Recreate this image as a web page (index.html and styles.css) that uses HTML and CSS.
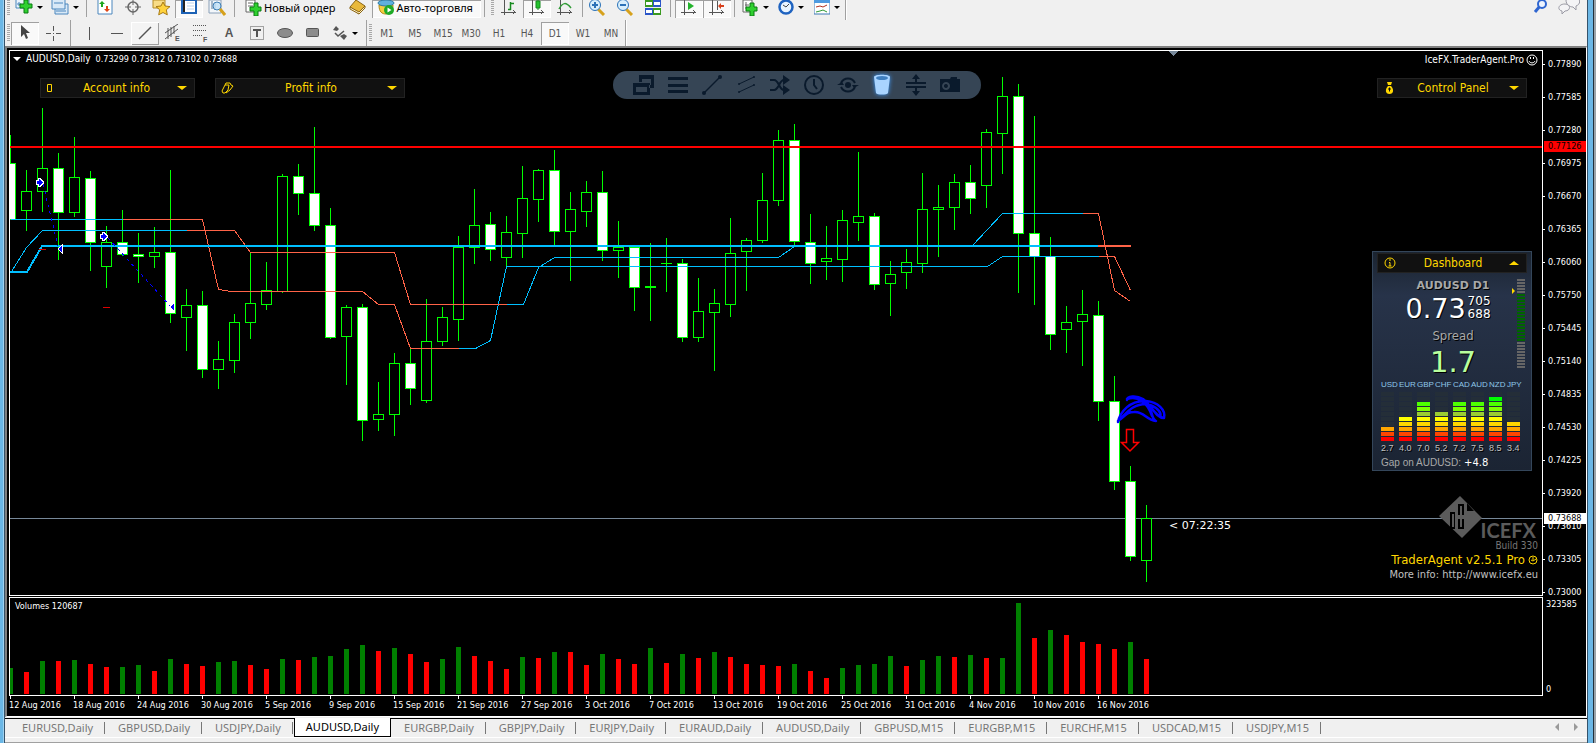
FILE: index.html
```html
<!DOCTYPE html>
<html lang="ru">
<head>
<meta charset="utf-8">
<title>AUDUSD,Daily</title>
<link rel="stylesheet" href="styles.css">
</head>
<body>
<div class="edge edge-left"></div>
<div class="window">
  <header class="bars">
    <div class="bar bar-main" role="toolbar" aria-label="Standard">
      <i class="grip"></i>
      <button class="tool with-caret" aria-label="New chart"><svg width="18" height="16"><path d="M1 0v8h13V0" fill="#eaf3fb" stroke="#4b86bd"/><path d="M4 2v4M2 4h4" stroke="#4b86bd"/><path d="M9 0h4v4h4v4h-4v5H9V8H5V4h4z" fill="#2fd02f" stroke="#0a7a12"/></svg><b class="caret"></b></button>
      <button class="tool with-caret" aria-label="Profiles"><svg width="18" height="16"><path d="M1 0v9h13V0M4 9v5h13V4h-3" fill="#d9e9f7" stroke="#4b86bd"/><path d="M3 3h9M5 11h10" stroke="#4b86bd"/></svg><b class="caret"></b></button>
      <i class="sep"></i>
      <button class="tool" aria-label="Market Watch"><svg width="16" height="16"><path d="M1 0v14h14V0" fill="#fff" stroke="#4b86bd"/><path d="M5 1l3 3H6v3H4V4H2z" fill="#1fa51f"/><path d="M10 12L7 9h2V6h2v3h2z" fill="#e04416"/></svg></button>
      <button class="tool" aria-label="Data Window"><svg width="16" height="16" fill="none" stroke="#666"><circle cx="8" cy="7" r="5" stroke-width="1.500"/><path d="M8 0v5M8 9v6M0 7h6M10 7h6"/></svg></button>
      <button class="tool" aria-label="Navigator"><svg width="19" height="16"><path d="M1 0v8h12V0z" fill="#f8dc86" stroke="#b58b26"/><path d="M11 2l2 4 5 .6-3.700 3.200 1 5L11 12.500 6.700 14.800l1-5L4 6.600 9 6z" fill="#ffd23c" stroke="#a87a12"/></svg></button>
      <button class="tool pressed" aria-label="Terminal"><svg width="16" height="16"><path d="M1 0v13h14V0z" fill="#fff" stroke="#1d62b5" stroke-width="2"/><path d="M3 0v12" stroke="#222" stroke-width="2"/><path d="M6 3h7M6 6h7M6 9h7" stroke="#b9d2ee"/></svg></button>
      <button class="tool" aria-label="Strategy Tester"><svg width="18" height="16"><path d="M1 0v13h12V0z" fill="#f3f7fb" stroke="#8aa0b8"/><path d="M4 1v8M7 3v7" stroke="#5a7a9a"/><circle cx="9" cy="6" r="4" fill="#bfe0f7" fill-opacity=".8" stroke="#3f7fb5"/><path d="M12 9l5 6" stroke="#d6a11c" stroke-width="3"/></svg></button>
      <i class="sep"></i>
      <button class="tool text" aria-label="Новый ордер"><svg width="18" height="16"><path d="M2 0v12h9V0z" fill="#fff" stroke="#666"/><path d="M4 3h5M4 6h5" stroke="#666"/><path d="M10 3h4v4h3v4h-3v5h-4v-5H6V7h4z" fill="#2fd02f" stroke="#0a7a12"/></svg><span>Новый ордер</span></button>
      <button class="tool" aria-label="MetaEditor"><svg width="18" height="16"><path d="M1 7L7 0l9 6-6 8z" fill="#e9b93b" stroke="#8a6414"/><path d="M1 7l9 5 6-6v2l-6 6-9-5z" fill="#fff2c4" stroke="#8a6414"/></svg></button>
      <button class="tool text pressed" aria-label="Авто-торговля"><svg width="18" height="16"><path d="M2 5c0 7 3 9 7 9s7-2 7-9z" fill="#f4cd3f" stroke="#b18918"/><ellipse cx="9" cy="3" rx="8" ry="3" fill="#5fb0dc" stroke="#2d7aa5"/><circle cx="12" cy="10" r="5" fill="#1faa27"/><path d="M10.500 7.500l4 2.500-4 2.500z" fill="#fff"/></svg><span>Авто-торговля</span></button>
      <i class="sep"></i><i class="grip"></i>
      <button class="tool" aria-label="Bar chart"><svg width="16" height="16" fill="none"><path d="M3.500 0v15M0 12.500h15M12 10l2 2-2 2" stroke="#555"/><path d="M9.500 2v8M7 9.500h3M10 3.500h3" stroke="#168a1e" stroke-width="1.500"/></svg></button>
      <button class="tool pressed" aria-label="Candlesticks"><svg width="16" height="16" fill="none"><path d="M3.500 0v15M0 12.500h15M12 10l2 2-2 2" stroke="#555"/><path d="M9 0v10" stroke="#168a1e"/><path d="M7 1h4v7H7z" fill="#23c32c" stroke="#168a1e"/></svg></button>
      <button class="tool" aria-label="Line chart"><svg width="16" height="16" fill="none"><path d="M3.500 0v15M0 12.500h15M12 10l2 2-2 2" stroke="#555"/><path d="M2 9c4-7 7-7 12-1" stroke="#2f9a35" stroke-width="1.500"/></svg></button>
      <i class="sep sep-tight"></i>
      <button class="tool" aria-label="Zoom in"><svg width="18" height="16"><path d="M10 9l6 6" stroke="#d6a11c" stroke-width="3"/><circle cx="7" cy="5" r="5.500" fill="#d8effc" stroke="#2b72b8"/><path d="M4 5h6M7 2v6" stroke="#2b72b8" stroke-width="2"/></svg></button>
      <button class="tool" aria-label="Zoom out"><svg width="18" height="16"><path d="M10 9l6 6" stroke="#d6a11c" stroke-width="3"/><circle cx="7" cy="5" r="5.500" fill="#d8effc" stroke="#2b72b8"/><path d="M4 5h6" stroke="#2b72b8" stroke-width="2"/></svg></button>
      <button class="tool" aria-label="Tile windows"><svg width="16" height="16"><path d="M0 0h8v7H0zM8 8h8v7H8z" fill="#3a9a20"/><path d="M8 0h8v7H8zM0 8h8v7H0z" fill="#2a55c8"/><path d="M1 2h6v3H1zM9 2h6v3H9zM1 10h6v3H1zM9 10h6v3H9z" fill="#fff"/></svg></button>
      <i class="sep"></i>
      <button class="tool pressed" aria-label="Auto scroll"><svg width="16" height="16" fill="none"><path d="M3.500 0v15M0 12.500h15M12 10l2 2-2 2" stroke="#555"/><path d="M7 2l6 4-6 4z" fill="#23b32c"/></svg></button>
      <button class="tool pressed" aria-label="Chart shift"><svg width="16" height="16" fill="none"><path d="M3.500 0v15M0 12.500h15M12 10l2 2-2 2M8.500 1v9" stroke="#555"/><path d="M9 6l3-3v2h3v2h-3v2z" fill="#d8401c"/></svg></button>
      <i class="sep sep-mid"></i>
      <button class="tool with-caret" aria-label="Indicators"><svg width="18" height="16"><path d="M2 0v12h9V0z" fill="#fff" stroke="#666"/><path d="M5 2v7M4 5h4" stroke="#666"/><path d="M9 3h4v4h3v4h-3v5H9v-5H5V7h4z" fill="#2fd02f" stroke="#0a7a12"/></svg><b class="caret"></b></button>
      <button class="tool with-caret" aria-label="Periods"><svg width="16" height="16"><circle cx="8" cy="7" r="6.500" fill="#eaf5ff" stroke="#1f63c0" stroke-width="2.500"/><path d="M5 5l3 2 3-3" fill="none" stroke="#444"/></svg><b class="caret"></b></button>
      <button class="tool with-caret" aria-label="Templates"><svg width="16" height="16"><path d="M0 0h16v14H0z" fill="#fff" stroke="#3c78b4"/><path d="M0 0h16v3H0z" fill="#4d9ae0"/><path d="M2 7l4-1 3 1 4-2" fill="none" stroke="#b03020"/><path d="M2 12l4-1 3-1 4 2" fill="none" stroke="#2f9a35"/></svg><b class="caret"></b></button>
      <span class="bar-end"></span>
      <span class="spacer"></span>
      <button class="tool" aria-label="Search"><svg width="16" height="14" fill="none"><path d="M2 12l5-6" stroke="#2f66d0" stroke-width="3"/><circle cx="9" cy="4" r="4" fill="#eef4ff" stroke="#2f66d0" stroke-width="2"/></svg></button>
      <button class="tool tool-chat" aria-label="Chat"><svg width="22" height="16" fill="#f4f4f6" stroke="#9a9aa4"><path d="M8 0c0 5 4 7 7 7l3 3V6c5-2 4-6 2-8"/><path d="M7 4c-7 0-8 6-3 7v3l3-3c6 0 6-7 0-7z"/></svg></button>
    </div>
    <div class="bar bar-draw" role="toolbar" aria-label="Drawing">
      <i class="grip"></i>
      <button class="tool pressed" aria-label="Cursor"><svg width="12" height="16"><path d="M2 0v12l3-3 2 5 2-1-2-5h4z" fill="#444"/></svg></button>
      <button class="tool" aria-label="Crosshair"><svg width="16" height="16" stroke="#555"><path d="M8.500 1v5M8.500 11v5M1 8.500h5M11 8.500h5"/><path d="M8 8.500h1"/></svg></button>
      <i class="sep"></i>
      <button class="tool" aria-label="Vertical line"><svg width="2" height="13"><path d="M1.500 0v13" stroke="#555"/></svg></button>
      <button class="tool" aria-label="Horizontal line"><svg width="12" height="3"><path d="M0 1.500h12" stroke="#555"/></svg></button>
      <button class="tool raised" aria-label="Trend line"><svg width="14" height="14"><path d="M1 13L13 1" stroke="#555" stroke-width="1.500"/></svg></button>
      <button class="tool" aria-label="Equidistant channel"><svg width="18" height="18" stroke="#555"><path d="M1 9L14 0M1 15L14 5M4 4v11M7 3v10M10 2v8"/><text x="11" y="17" class="glyph">E</text></svg></button>
      <button class="tool" aria-label="Fibonacci"><svg width="16" height="18"><path d="M0 1.500h14M0 6.500h14M0 11.500h10" stroke="#555" stroke-dasharray="1 1"/><text x="10" y="18" class="glyph">F</text></svg></button>
      <button class="tool big" aria-label="Text">A</button>
      <button class="tool" aria-label="Text label"><svg width="14" height="14"><path d="M.5.5h13v13H.5z" fill="none" stroke="#555" stroke-dasharray="1 1"/><path d="M3 4h8M7 4v7" stroke="#555" stroke-width="2"/></svg></button>
      <button class="tool" aria-label="Ellipse"><svg width="16" height="12"><ellipse cx="8" cy="6" rx="7.500" ry="4.500" fill="#8c8c8c" stroke="#555"/></svg></button>
      <button class="tool" aria-label="Rectangle"><svg width="14" height="10"><rect x=".5" y=".5" width="12" height="8" rx="1" fill="#8c8c8c" stroke="#555"/></svg></button>
      <button class="tool with-caret" aria-label="Arrows"><svg width="16" height="14"><path d="M4 0l3 3-2 2-4-1zM12 8l3 2-3 4-4-4z" fill="#555"/><path d="M3 7l3 3 6-5" fill="none" stroke="#555" stroke-width="1.500"/></svg><b class="caret"></b></button>
      <i class="sep sep-tight"></i><i class="grip"></i>
      <button class="tool tf">M1</button><button class="tool tf">M5</button><button class="tool tf">M15</button><button class="tool tf">M30</button><button class="tool tf">H1</button><button class="tool tf">H4</button><button class="tool tf pressed">D1</button><button class="tool tf">W1</button><button class="tool tf">MN</button>
      <span class="bar-end"></span>
    </div>
  </header>

  <main class="chart">
    <section class="plot">
      <svg class="canvas" id="price" aria-label="AUDUSD price chart"></svg>
      <div class="quote"><b class="caret light"></b><span>AUDUSD,Daily</span><span class="ohlc">0.73299 0.73812 0.73102 0.73688</span></div>
      <div class="expert"><span>IceFX.TraderAgent.Pro</span><svg width="12" height="12" fill="none" stroke="#fff"><circle cx="6" cy="6" r="5"/><path d="M3 7c1 2.500 5 2.500 6 0M4.500 3v2M7.500 3v2"/></svg></div>
      <div class="panels">
        <button class="head head-account"><svg width="10" height="12"><path d="M1.500 2.500h4v7h-4z" fill="none" stroke="#ffd700"/></svg><span>Account info</span><b class="caret wide"></b></button>
        <button class="head head-profit"><svg width="14" height="12" fill="none" stroke="#ffd700"><path d="M4 3h4l-1 5-3 3H2l-1-2zM4 3l1-2h4l1 2M10 3l2 1-3 4-4 3"/></svg><span>Profit info</span><b class="caret wide"></b></button>
      </div>
      <div class="pill" role="toolbar" aria-label="Chart tools">
        <button aria-label="Windows"><svg viewBox="0 0 22 22"><path d="M6 1h15v13h-5v-3h2V5H9v3H6zM0 9h17v12H0zM3 13v5h11v-5z" fill-rule="evenodd"/></svg></button>
        <button aria-label="Levels"><svg viewBox="0 0 22 22"><path d="M1 3h20v3H1zM1 10h20v3H1zM1 16h20v3H1z"/></svg></button>
        <button aria-label="Line"><svg viewBox="0 0 22 22"><path d="M3 19L19 3" class="stroke"/><circle cx="3" cy="19" r="2"/><circle cx="19" cy="3" r="2"/></svg></button>
        <button aria-label="Channel"><svg viewBox="0 0 22 22"><path d="M4 10l15-7M4 18l15-7" class="stroke thin"/><circle cx="4" cy="10" r="1"/><circle cx="19" cy="3" r="1"/><circle cx="4" cy="18" r="1"/><circle cx="19" cy="11" r="1"/></svg></button>
        <button aria-label="Shuffle"><svg viewBox="0 0 22 22"><path d="M1 6h4c5 0 5 10 10 10M1 16h4c5 0 5-10 10-10" class="stroke thick"/><path d="M14 1l7 5-7 5zM14 11l7 5-7 5z"/></svg></button>
        <button aria-label="Time"><svg viewBox="0 0 22 22"><circle cx="11" cy="11" r="9" class="stroke thick"/><path d="M11 5v6l3 4" class="stroke thick"/></svg></button>
        <button aria-label="Refresh"><svg viewBox="0 0 22 22"><path d="M4 9c3-6 11-6 14 0M4 13c3 6 11 6 14 0" class="stroke thick"/><circle cx="11" cy="11" r="3"/><path d="M0 11l5-3 2 3zM22 11l-5 3-2-3z"/></svg></button>
        <button class="lit" aria-label="Trash"><svg viewBox="0 0 22 22"><path d="M3 3c0-3 16-3 16 0l-2 16c-1 2-11 2-12 0z"/><ellipse cx="11" cy="4" rx="6" ry="2" fill="#3f7fc0"/></svg></button>
        <button aria-label="Fit"><svg viewBox="0 0 22 22"><path d="M1 8h20v2H1zM1 12h20v2H1zM10 3h2v6h-2zM10 13h2v6h-2z"/><path d="M7 5l4-5 4 5zM7 17l4 5 4-5z"/></svg></button>
        <button aria-label="Screenshot"><svg viewBox="0 0 22 22"><path d="M1 5h10l1-2h6v2h3v13H1zM7 8a4 4 0 1 0 .1 0zM7 10a2 2 0 1 1-.1 0z" fill-rule="evenodd"/></svg></button>
      </div>
      <aside class="side">
        <button class="head"><svg width="14" height="12" fill="#ffd700"><path d="M4 0h5L8 3H5zM5 4h3c3 3 3 8-1.500 8S2 7 5 4z"/><path d="M6.500 5.500v4M5 7h3" stroke="#111"/></svg><span>Control Panel</span><b class="caret wide"></b></button>
        <section class="dash">
          <button class="head"><svg width="14" height="12"><circle cx="7" cy="6" r="5" fill="none" stroke="#ffd700"/><path d="M7 2v2M6 5.500h1V9M5.500 9h3" fill="none" stroke="#ffd700"/></svg><span>Dashboard</span><b class="caret wide up"></b></button>
          <div class="dash-quote">
            <div class="dash-main">
              <h2>AUDUSD D1</h2>
              <div class="rate"><span class="rate-big">0.73</span><span class="rate-small"><span>705</span><span>688</span></span></div>
              <div class="spread-label">Spread</div>
              <div class="spread">1.7</div>
            </div>
            <div class="pointer"></div>
            <div class="meter" id="meter"></div>
          </div>
          <div class="strength" id="strength"></div>
          <div class="gap-row"><span>Gap on AUDUSD:</span><span class="gap-value">+4.8</span></div>
        </section>
      </aside>
      <div class="credit">
        <div class="brand"><svg width="44" height="44"><path d="M21 1l22 22-20 20L0 21z" fill="#5b5b5b"/><path d="M11 17h5v17h-5zM19 9h6v11h-6zM19 24h6v10h-6zM28 8l7 8h-7z" fill="#000"/><path d="M13 19h2v13h-2zM21 11h2v21h-2z" fill="#5b5b5b"/></svg><span>ICEFX</span></div>
        <div class="build">Build 330</div>
        <div class="product"><span>TraderAgent v2.5.1 Pro</span><svg width="10" height="10" fill="none" stroke="#ffd700"><circle cx="5" cy="5" r="4"/><path d="M3 5l2 1 3-2M5 2v3"/></svg></div>
        <div class="more">More info: http://www.icefx.eu</div>
      </div>
    </section>
    <div class="scale">
      <ul class="prices">
        <li>0.77890</li><li>0.77585</li><li>0.77280</li><li>0.76975</li><li>0.76670</li><li>0.76365</li><li>0.76060</li><li>0.75750</li><li>0.75445</li><li>0.75140</li><li>0.74835</li><li>0.74530</li><li>0.74225</li><li>0.73920</li><li>0.73610</li><li>0.73305</li><li>0.73000</li>
      </ul>
      <span class="tag tag-level">0.77126</span>
      <span class="tag tag-bid">0.73688</span>
    </div>
    <section class="plot volume">
      <svg class="canvas" id="volume" aria-label="Volumes"></svg>
      <div class="volume-label">Volumes 120687</div>
    </section>
    <div class="scale vol-scale"><span>323585</span><span>0</span></div>
    <ol class="dates">
      <li>12 Aug 2016</li><li>18 Aug 2016</li><li>24 Aug 2016</li><li>30 Aug 2016</li><li>5 Sep 2016</li><li>9 Sep 2016</li><li>15 Sep 2016</li><li>21 Sep 2016</li><li>27 Sep 2016</li><li>3 Oct 2016</li><li>7 Oct 2016</li><li>13 Oct 2016</li><li>19 Oct 2016</li><li>25 Oct 2016</li><li>31 Oct 2016</li><li>4 Nov 2016</li><li>10 Nov 2016</li><li>16 Nov 2016</li>
    </ol>
  </main>

  <footer class="tabs">
    <nav>
      <a href="#c1">EURUSD,Daily</a><a href="#c2">GBPUSD,Daily</a><a href="#c3">USDJPY,Daily</a><a href="#c4" class="active">AUDUSD,Daily</a><a href="#c5">EURGBP,Daily</a><a href="#c6">GBPJPY,Daily</a><a href="#c7">EURJPY,Daily</a><a href="#c8">EURAUD,Daily</a><a href="#c9">AUDUSD,Daily</a><a href="#c10">GBPUSD,M15</a><a href="#c11">EURGBP,M15</a><a href="#c12">EURCHF,M15</a><a href="#c13">USDCAD,M15</a><a href="#c14">USDJPY,M15</a>
    </nav>
    <div class="scrollers"><button aria-label="Previous tabs"><svg width="5" height="8"><path d="M4 0v8L0 4z" fill="#999"/></svg></button><button aria-label="Next tabs"><svg width="5" height="8"><path d="M0 0v8l4-4z" fill="#999"/></svg></button></div>
  </footer>
</div>
<div class="edge edge-right"></div>
<script src="chart.js"></script>
</body>
</html>
```
FILE: styles.css
```css
* { box-sizing: border-box; }
body { margin: 0; display: flex; min-height: 100vh; background: #f0f0f0; font-family: "DejaVu Sans Condensed", "DejaVu Sans", sans-serif; font-size: 9px; color: #fff; }
button { border: 0; padding: 0; margin: 0; background: none; font: inherit; color: inherit; }
ul, ol { list-style: none; margin: 0; padding: 0; }
svg { display: block; flex: none; }

.edge { flex: none; }
.edge-left { width: 5px; background: linear-gradient(90deg, #6bb7e6 0 3px, #9fd2f0 3px 4px, #34526a 4px); }
.edge-right { width: 9px; background: linear-gradient(90deg, #34526a 0 1px, #6bb7e6 1px 6px, #22313d 6px 7px, #9aa3aa 7px); }
.window { flex: 1; min-width: 0; display: flex; flex-direction: column; }

.bar { display: flex; }
.bar-main { height: 20px; align-items: flex-start; }
.bar-main .tool { height: 18px; align-items: flex-start; }
.bar-draw { height: 26px; align-items: center; }
.grip { width: 4px; margin: 0 0 0 2px; align-self: stretch; flex: none; background: repeating-linear-gradient(#a8a8a8 0 1px, #f0f0f0 1px 2px); background-size: 3px 100%; background-repeat: no-repeat; }
.bar-main .grip { height: 16px; }
.bar-draw .grip { margin-top: 4px; margin-bottom: 4px; }
.tool { width: 28px; height: 23px; flex: none; display: flex; align-items: center; justify-content: center; color: #555; }
.with-caret { width: 36px; gap: 4px; }
.bar-main .caret { margin-top: 6px; }
.tool.text { width: auto; gap: 2px; padding: 0 8px 0 5px; color: #000; font-family: "Noto Sans", sans-serif; font-size: 11px; line-height: 15px; white-space: nowrap; }
.tool-chat { margin-right: 4px; }
.pressed { background: #f9f9f9; box-shadow: inset 1px 1px #a0a0a0, inset -1px -1px #fff; }
.raised { background: #f4f4f4; box-shadow: inset 1px 1px #fff, inset -1px -1px #a0a0a0; }
.big { font-family: "Liberation Sans", sans-serif; font-size: 12px; font-weight: bold; }
.tf { font-size: 10px; }
.glyph { font-family: "Liberation Sans", sans-serif; font-size: 7px; font-weight: bold; fill: #555; stroke: none; }
.sep { width: 8px; flex: none; align-self: stretch; background: linear-gradient(90deg, transparent 3px, #a0a0a0 3px 4px, transparent 4px); }
.sep-mid { width: 6px; }
.sep-tight { width: 4px; }
.bar-main .sep { height: 17px; }
.bar-end { width: 2px; align-self: stretch; background: #a0a0a0; border-right: 1px solid #fff; }
.spacer { flex: 1; }
.caret { flex: none; width: 0; height: 0; border: solid transparent; border-width: 3px 3px 0; border-top-color: #000; }
.caret.light { border-width: 4px 4px 0; border-top-color: #fff; }
.caret.wide { border-width: 4px 5px 0; border-top-color: #ffd700; }
.caret.wide.up { border-width: 0 5px 4px; border-bottom-color: #ffd700; }

.chart { flex: 1; display: grid; grid-template-columns: minmax(0, 1fr) 43px; grid-template-rows: minmax(546px, 1fr) 99px 19px; row-gap: 1px; padding: 2px 0 0 2px; background: #000; border: solid #808080; border-width: 2px 1px 1px 2px; border-right-color: #fff; border-bottom-color: #fff; }
.plot { position: relative; border: 1px solid #fff; overflow: hidden; }
.canvas { position: absolute; inset: 0; width: 100%; height: 100%; shape-rendering: crispEdges; }
.canvas .smooth { shape-rendering: auto; }
.canvas text { font-family: "DejaVu Sans", sans-serif; font-size: 11px; fill: #fff; }
.quote { position: absolute; left: 3px; top: 2px; display: flex; align-items: center; gap: 5px; line-height: 12px; font-size: 10px; }
.ohlc { font-size: 9px; }
.expert { position: absolute; right: 4px; top: 3px; display: flex; align-items: center; gap: 2px; line-height: 12px; font-size: 10px; }
.panels { position: absolute; left: 30px; top: 27px; display: flex; gap: 20px; }
.head { display: flex; align-items: center; width: 100%; height: 20px; padding: 0 7px 0 5px; background: #111; border: 1px solid #222; color: #ffd700; font-size: 12px; }
.head span { flex: 1; text-align: center; }
.head-account { width: 155px; }
.head-profit { width: 190px; }
.pill { position: absolute; left: 603px; top: 20px; display: flex; padding: 0 14px; border-radius: 14px; background: #364555; }
.pill button { width: 34px; height: 28px; display: grid; place-items: center; }
.pill svg { width: 22px; height: 22px; fill: #0a1a2c; }
.pill .stroke { fill: none; stroke: #0a1a2c; stroke-width: 1.5; }
.pill .thin { stroke-width: 1; }
.pill .thick { stroke-width: 2; }
.pill .lit svg { fill: #a9d4ff; filter: drop-shadow(0 0 2px #3f9cff); }
.side { position: absolute; right: 10px; top: 27px; width: 160px; display: flex; flex-direction: column; gap: 153px; }
.side > .head { align-self: center; width: 150px; }
.dash { padding: 1px 4px 0; border: 1px solid #34465a; background: linear-gradient(#1b2430, #273349 20%, #1b2433); font-family: "DejaVu Sans", sans-serif; }
.dash .head { font-family: "DejaVu Sans Condensed", sans-serif; }
.dash-quote { display: flex; height: 107px; padding: 6px 2px 0 0; }
.dash-main { flex: 1; padding-left: 17px; text-align: center; text-shadow: 1px 1px #000; }
.dash h2 { margin: 0; font: bold 11px/14px "DejaVu Sans", sans-serif; color: #a9a9a9; }
.rate { display: flex; justify-content: center; gap: 2px; padding-right: 10px; line-height: 32px; }
.rate-big { font-size: 27px; }
.rate-small { display: flex; flex-direction: column; padding-top: 2px; font-size: 12px; line-height: 13px; }
.spread-label { font: 13px/22px "DejaVu Sans Condensed", sans-serif; color: #a9a9a9; }
.spread { font-size: 29px; line-height: 30px; color: #b8ff9e; }
.pointer { margin: 9px 2px 0 0; width: 0; height: 6px; border: solid transparent; border-width: 3px 0 3px 3px; border-left-color: #ffd700; }
.meter { width: 8px; display: flex; flex-direction: column; gap: 1px; }
.meter i { height: 2px; background: #666; }
.meter .on { background: #006400; }
.strength { display: grid; grid-template-columns: repeat(8, 18px); margin-left: 4px; font-family: "Liberation Sans", sans-serif; }
.currency { display: flex; flex-direction: column; gap: 1px; }
.currency b { font-size: 8px; font-weight: normal; line-height: 9px; color: #8fc7e8; margin-bottom: 2px; }
.currency i { width: 13px; height: 4px; background: #242e38; }
.currency span { font-size: 9px; line-height: 11px; color: #c0c0c0; margin-top: 1px; text-shadow: 1px 1px #000; }
.gap-row { display: flex; gap: 3px; padding: 2px 4px 0; font: 10px/14px "Liberation Sans", sans-serif; color: #a9a9a9; }
.gap-value { font-family: "DejaVu Sans", sans-serif; color: #fff; }
.credit { position: absolute; right: 4px; bottom: 14px; display: flex; flex-direction: column; align-items: flex-end; }
.brand { display: flex; align-items: flex-end; padding-right: 2px; color: #5b5b5b; font: 20px/20px Lato, sans-serif; }
.brand svg { margin-right: -2px; margin-bottom: 1px; }
.brand span { font-weight: 700; }
.build { font-size: 10px; line-height: 12px; color: #777; }
.product { display: flex; align-items: center; gap: 3px; font-size: 13px; line-height: 16px; color: #ffd700; }
.more { font-size: 11px; line-height: 13px; color: #c0c0c0; }

.scale { position: relative; line-height: 12px; }
.prices { display: flex; flex-direction: column; gap: 25px; padding-top: 10px; line-height: 8px; }
.prices li { display: flex; align-items: center; gap: 3px; }
.prices li::before { content: ""; width: 2px; height: 1px; background: #fff; }
.tag { position: absolute; left: 1px; right: 0; height: 11px; line-height: 11px; padding-left: 4px; color: #000; }
.tag-level { top: 91px; background: #f00; }
.tag-bid { top: 463px; background: #fff; }
.volume-label { position: absolute; left: 5px; top: 2px; line-height: 12px; }
.vol-scale { display: flex; flex-direction: column; justify-content: space-between; padding: 1px 3px; }
.dates { grid-column: 1 / -1; display: flex; margin-top: -1px; }
.dates li { width: 64px; flex: none; line-height: 12px; white-space: nowrap; }
.dates li::before { content: ""; display: block; width: 1px; height: 3px; margin-left: 1px; background: #fff; }

.tabs { display: flex; justify-content: space-between; height: 26px; padding-bottom: 6px; background: linear-gradient(#f0f0f0 0 1px, #000 1px 2px, #f0f0f0 2px 20px, #fff 20px 21px, #f0f0f0 21px 25px, #a0a0a0 25px); }
.tabs nav { display: flex; gap: 1px; padding-top: 2px; padding-left: 5px; font: 11px/18px "Noto Sans", sans-serif; }
.tabs a { color: #777; text-decoration: none; padding: 0 12px; background: linear-gradient(#777, #777) right center / 1px 12px no-repeat; white-space: nowrap; }
.tabs .active { color: #000; background: #fff; border: solid #000; border-width: 0 1px 1px; margin-top: -1px; padding: 0 11px; }
.scrollers { display: flex; align-items: center; gap: 14px; padding-right: 8px; }
```
FILE: chart.js
```javascript
const NS = 'http://www.w3.org/2000/svg';
const STEP = 16;

// Each candle: high, body top, body bottom, low, falling (1) or rising (0)
const candles = [
  [135,163,219,219,1],[170,191,210,230,0],[108,168,191,211,0],[153,168,212,259,1],[137,177,212,216,0],[171,178,242,270,1],
  [226,242,266,287,0],[210,242,254,255,1],[233,254,256,282,1],[227,252,256,267,0],[170,252,313,322,1],[289,305,317,350,0],
  [291,305,369,377,1],[341,359,369,388,0],[314,322,360,372,0],[252,303,322,338,0],[262,290,304,309,0],[174,176,291,292,0],
  [164,176,193,214,1],[127,193,225,230,1],[208,225,337,338,1],[305,307,336,384,0],[304,307,420,440,1],[382,414,419,430,0],
  [353,363,414,435,0],[348,363,388,404,1],[299,341,400,402,0],[307,317,341,345,0],[236,247,319,340,0],[189,225,247,263,0],
  [212,224,249,260,1],[216,232,257,266,0],[166,198,233,257,0],[169,170,199,221,0],[150,170,231,245,1],[192,209,231,280,0],
  [181,192,211,226,0],[171,192,250,260,1],[221,247,250,277,0],[246,247,287,310,1],[243,286,287,320,0],[238,263,263,291,0],
  [259,263,337,341,1],[278,311,337,341,0],[289,303,312,370,0],[218,253,304,316,0],[238,240,251,290,0],[173,200,240,242,0],
  [130,140,200,205,0],[124,140,241,245,1],[214,242,263,283,1],[226,258,261,279,0],[210,220,259,281,0],[152,216,222,240,0],
  [213,216,284,289,1],[261,274,283,315,0],[249,262,272,288,0],[173,209,263,272,0],[185,207,209,256,0],[174,182,207,229,0],
  [165,182,198,213,1],[129,132,185,207,0],[77,96,133,173,0],[84,96,233,292,1],[116,233,256,304,1],[237,256,334,349,1],
  [306,322,329,352,0],[290,314,321,365,0],[301,315,401,420,1],[376,401,481,489,1],[466,481,556,560,1],[505,518,560,581,0]
];

const volumes = [26,22,33,33,34,30,27,27,29,23,35,30,28,32,33,29,25,35,34,37,38,45,49,43,46,40,32,35,47,38,33,25,37,36,42,42,
  29,40,35,30,46,31,40,36,42,37,30,29,28,30,23,16,26,29,30,38,28,34,38,37,39,36,36,91,56,64,59,52,50,45,52,35];
const volumeTone = 'GRGRGRRGGRGRRGGRRGRGGGGRGRRGGRRRGRGRRGRRGRGRGRRRRGRRGGGGRGGRGRGGRGRRRRGR';

function add(parent, name, attrs, text) {
  const el = document.createElementNS(NS, name);
  for (const key in attrs) el.setAttribute(key, attrs[key]);
  if (text) el.textContent = text;
  parent.appendChild(el);
  return el;
}

const price = document.getElementById('price');
add(price, 'rect', { x: 0, y: 467, width: '100%', height: 1, fill: '#778899' });
const g = add(price, 'g', { transform: 'translate(-10 -51)' });

candles.forEach(([high, top, bottom, low, falling], i) => {
  const x = 10 + STEP * i;
  add(g, 'rect', { x, y: high, width: 1, height: low - high + 1, fill: '#0f0' });
  add(g, 'rect', { x: x - 5, y: top, width: 11, height: bottom - top + 1, fill: '#0f0' });
  if (bottom - top > 1) {
    add(g, 'rect', { x: x - 4, y: top + 1, width: 9, height: bottom - top - 1, fill: falling ? '#fff' : '#000' });
  }
});

const BLUE = '#00bfff';
const CORAL = '#ff6347';
const lines = [
  [BLUE, 1, '10,219 122,219'],
  [CORAL, 1, '122,219 202,219 218,289 231,291 362,291 378,304 394,304 410,348 458,348'],
  [BLUE, 1, '458,348 475,348 490,340 506,266 987,266 1002,256 1098,256'],
  [CORAL, 1, '1098,256 1114,256 1130,290'],
  [BLUE, 1, '11,271 26,247 42,230 186,230'],
  [CORAL, 1, '186,230 234,230 250,252 394,252 410,304 506,304'],
  [BLUE, 1, '506,304 523,304 538,267 554,257 778,257 794,246 972,245 1002,213 1082,213'],
  [CORAL, 1, '1082,213 1098,213 1114,290 1130,301'],
  [BLUE, 2, '10,272 27,272 42,246 1098,246'],
  [CORAL, 2, '1098,246 1131,246']
];
lines.forEach(([stroke, width, points]) => {
  const shift = width === 1 ? 'translate(.5 .5)' : '';
  add(g, 'polyline', { points, stroke, 'stroke-width': width, fill: 'none', transform: shift });
});
add(price, 'rect', { x: 0, y: 95, width: '100%', height: 2, fill: '#f00' });

// Closed trades
const marks = add(price, 'g', { transform: 'translate(-10 -51)' });
add(marks, 'path', { d: 'M43 184L58 246M108 238L170 306', stroke: '#00f', 'stroke-dasharray': '3 4', fill: 'none' });
[[36, 178], [100, 232]].forEach(([x, y]) => {
  add(marks, 'path', { d: `M${x} ${y + 2}h2v-2h2l4 4v1l-4 4h-2v-2h-2z`, fill: '#fff' });
  add(marks, 'path', { d: `M${x + 1} ${y + 3}h2v-2l4 3v1l-4 3v-2h-2z`, fill: '#00f' });
});
[[57, 249], [169, 307]].forEach(([x, y]) => {
  add(marks, 'path', { d: `M${x} ${y}l6 -5v10z`, fill: '#fff' });
  add(marks, 'path', { d: `M${x + 1} ${y}l4 -4v8z`, fill: '#00f' });
});
add(marks, 'path', { d: 'M39 249.500h7M103 307.500h7', stroke: '#d00' });

// Freehand stroke, sell arrow, bar timer
add(marks, 'path', {
  class: 'smooth', fill: 'none', stroke: '#00f', 'stroke-width': 2.5, 'stroke-linecap': 'round', 'stroke-linejoin': 'round',
  d: 'M1118 422C1120 412 1130 400 1146 401C1158 402 1166 410 1164 418C1156 418 1151 405 1143 399C1136 395 1127 396 1127 400M1118 421C1126 414 1132 404 1146 404C1154 410 1150 418 1156 421C1146 420 1144 411 1134 412C1126 412 1126 416 1118 421M1127 399C1138 395 1148 403 1152 416M1150 405C1158 408 1162 413 1160 417'
});
add(marks, 'path', { class: 'smooth', fill: 'none', stroke: '#f00', 'stroke-width': 1.5, d: 'M1126.500 429.500h7v13h5l-8.500 8.500l-8.500 -8.500h5z' });
add(marks, 'text', { x: 1169, y: 529 }, '< 07:22:35');
add(marks, 'path', { d: 'M1168 51h10l-5 5z', fill: '#778899' });

const vol = document.getElementById('volume');
volumes.forEach((h, i) => {
  add(vol, 'rect', { x: STEP * i - 2, y: 96 - h, width: 5, height: h, fill: volumeTone[i] === 'G' ? '#008000' : '#f00' });
});

const meter = document.getElementById('meter');
for (let i = 0; i < 30; i++) {
  const cell = document.createElement('i');
  if (i >= 5 && i < 21) cell.className = 'on';
  meter.appendChild(cell);
}

const tones = ['#f00', '#ff4500', '#ffa500', '#ffd700', '#ff0', '#9acd32', '#7cff00', '#4dff00', '#0f0', '#0f0'];
const strength = [['USD', 3, '2.7'], ['EUR', 5, '4.0'], ['GBP', 8, '7.0'], ['CHF', 6, '5.2'], ['CAD', 8, '7.2'], ['AUD', 8, '7.5'], ['NZD', 9, '8.5'], ['JPY', 4, '3.4']];
const strengthBox = document.getElementById('strength');
strength.forEach(([name, level, value]) => {
  const col = document.createElement('div');
  col.className = 'currency';
  const title = document.createElement('b');
  title.textContent = name;
  col.appendChild(title);
  for (let row = 10; row > 0; row--) {
    const cell = document.createElement('i');
    if (row <= level) cell.style.background = tones[row - 1];
    col.appendChild(cell);
  }
  const label = document.createElement('span');
  label.textContent = value;
  col.appendChild(label);
  strengthBox.appendChild(col);
});
```
